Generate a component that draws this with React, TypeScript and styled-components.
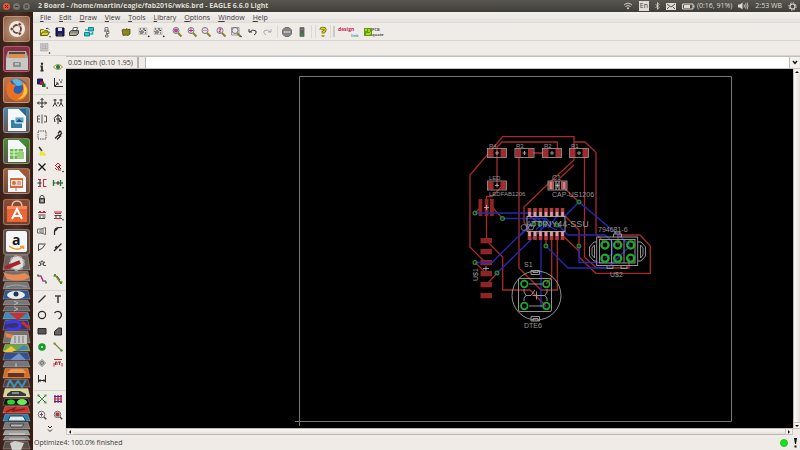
import React from "react";
import styled, { createGlobalStyle } from "styled-components";

const GlobalStyle = createGlobalStyle`
  * { box-sizing: border-box; }
  html, body, #root { height: 100%; margin: 0; }
  body { overflow: hidden; font: 7px/10px "Open Sans", "Noto Sans", sans-serif; color: #3c3c3c; background: #efebe7; }
  button, input { font: inherit; color: inherit; margin: 0; padding: 0; border: 0; background: none; }
  svg { display: block; flex: none; }
`;

const Desktop = styled.div`
  height: 100vh;
  display: flex;
  flex-direction: column;
`;

/* ---------- top panel ---------- */
const Panel = styled.header`
  height: 12px;
  flex: none;
  display: flex;
  align-items: center;
  padding: 0 3px;
  background: linear-gradient(#58564e, #3f3e39);
  color: #dfdbd2;
`;
const WindowButtons = styled.div`
  display: flex;
  gap: 3px;
  width: 35px;
`;
const RoundButton = styled.button<{ $close?: boolean }>`
  width: 7px;
  height: 7px;
  border-radius: 50%;
  display: grid;
  place-items: center;
  background: ${(p) => (p.$close ? "#e9562c" : "#75736b")};
`;
const Title = styled.h1`
  margin: 0;
  flex: 1;
  font-size: 7px;
  line-height: 12px;
  font-weight: 700;
  white-space: nowrap;
`;
const Indicators = styled.div`
  display: flex;
  align-items: center;
  gap: 6px;
  white-space: nowrap;
`;
const Language = styled.span`
  width: 10px;
  height: 10px;
  background: #dfdbd2;
  color: #45433e;
  text-align: center;
`;
const Battery = styled.span`
  display: flex;
  align-items: center;
  gap: 2px;
`;

/* ---------- launcher ---------- */
const Body = styled.div`
  flex: 1;
  display: flex;
  min-height: 0;
`;
const Launcher = styled.nav`
  width: 33px;
  flex: none;
  padding: 4px 0 0;
  overflow: hidden;
  background: linear-gradient(90deg, #3a2018, #4b3025 50%, #341c13);
`;
const OpenTiles = styled.div`
  height: 239px;
  display: flex;
  flex-direction: column;
  justify-content: space-between;
  align-items: center;
`;
const Tile = styled.button<{ $bg: string }>`
  width: 27px;
  height: 26px;
  border-radius: 3px;
  border: 1px solid rgba(255, 255, 255, 0.25);
  background: ${(p) => p.$bg};
  display: grid;
  place-items: center;
`;
const FoldedTiles = styled.div`
  display: flex;
  flex-direction: column;
  align-items: center;
`;
const FoldedTile = styled.button<{ $h: number }>`
  height: ${(p) => p.$h}px;
  width: 29px;
  display: block;
  overflow: hidden;
`;

/* ---------- application window ---------- */
const Window = styled.main`
  flex: 1;
  min-width: 0;
  display: flex;
  flex-direction: column;
`;
const MenuBar = styled.nav`
  height: 11px;
  flex: none;
  display: flex;
  gap: 8px;
  padding: 0 7px;
  line-height: 12px;
  background: linear-gradient(#f3f0ed, #e6e2de);
  border-bottom: 1px solid #dcd8d4;
`;
const MenuItem = styled.button`
  &::first-letter { text-decoration: underline; }
`;
const ToolBar = styled.div<{ $h: number; $pad: number }>`
  height: ${(p) => p.$h}px;
  flex: none;
  padding-left: ${(p) => p.$pad}px;
  display: flex;
  align-items: center;
  border-bottom: 1px solid #d9d5d1;
  background: #efece8;
`;
const Slot = styled.button<{ $w: number }>`
  width: ${(p) => p.$w}px;
  height: 14px;
  display: grid;
  place-items: center;
`;
const Divider = styled.i<{ $strong?: boolean }>`
  width: ${(p) => (p.$strong ? 2 : 1)}px;
  height: ${(p) => (p.$strong ? 11 : 13)}px;
  background: ${(p) => (p.$strong ? "#cdc9c5" : "#dad6d2")};
`;
const WorkArea = styled.div`
  flex: 1;
  min-height: 0;
  display: flex;
`;
const ToolBox = styled.aside`
  width: 33px;
  flex: none;
  display: flex;
  flex-direction: column;
  align-items: center;
  padding-top: 3px;
`;
const Handle = styled.i`
  width: 18px;
  height: 1px;
  margin-bottom: 1px;
  background: #cbc7c3;
`;
const ToolGroup = styled.div`
  display: grid;
  grid-template-columns: 16px 16px;
  grid-auto-rows: 16px;
  justify-content: center;
  & + & {
    border-top: 1px solid #d9d5d1;
    margin-top: 2px;
    padding-top: 1px;
  }
`;
const Editor = styled.div`
  flex: 1;
  min-width: 0;
  display: flex;
  flex-direction: column;
`;
const CommandRow = styled.div`
  height: 13px;
  flex: none;
  display: flex;
  border-top: 1px solid #c2bebb;
  border-bottom: 1px solid #c2bebb;
`;
const Coordinates = styled.output`
  width: 73px;
  padding-left: 2px;
  line-height: 11px;
  white-space: nowrap;
  border-right: 2px solid #b5b1ae;
`;
const Spacer = styled.i`
  width: 7px;
  border-right: 1px solid #b5b1ae;
`;
const CommandInput = styled.input`
  flex: 1;
  min-width: 0;
  background: #fff;
  outline: none;
`;
const Drop = styled.button`
  width: 10px;
  margin-right: 1px;
  display: grid;
  place-items: center;
  border-left: 1px solid #bdb9b6;
  background: #f4f2ef;
`;
const Viewport = styled.div`
  flex: 1;
  min-height: 0;
  display: flex;
`;
const Canvas = styled.div`
  flex: 1;
  min-width: 0;
  background: #000;
  overflow: hidden;
  svg { width: 100%; height: 100%; }
`;
const VScroll = styled.div`
  width: 7px;
  display: flex;
  flex-direction: column;
  background: #f6f3f1;
  border-left: 1px solid #bcb6b4;
`;
const HScroll = styled.div`
  height: 7px;
  flex: none;
  margin-right: 7px;
  display: flex;
  background: #f6f3f1;
  border: 1px solid #bcb6b4;
`;
const Thumb = styled.div`
  flex: 1;
  background: linear-gradient(#fbf9f7, #e5dfdc);
`;
const VThumb = styled(Thumb)`
  background: linear-gradient(90deg, #fbf9f7, #e5dfdc);
`;
const ScrollButton = styled.button`
  width: 6px;
  height: 5px;
  display: grid;
  place-items: center;
  background: #f4f1ef;
  outline: 1px solid #c9c3c1;
`;
const Status = styled.footer`
  height: 15px;
  flex: none;
  display: flex;
  align-items: center;
  padding: 0 2px 0 1px;
  gap: 5px;
`;
const StatusText = styled.span`
  flex: 1;
`;
const Lamp = styled.i`
  width: 8px;
  height: 8px;
  border-radius: 50%;
  background: #0be818;
  border: 1px solid #35b937;
`;

/* ---------- icons ---------- */
const K = "#2a2a2a";
const R = "#c22738";
const lens = (
  <>
    <path d="M7 7 10.5 10.5" stroke="#8a8420" strokeWidth="2" />
    <circle cx="5" cy="4.5" r="3" fill="#e8e2ea" stroke="#777" />
  </>
);
const smallLens = (
  <>
    <circle cx="5.5" cy="5.5" r="3.3" fill="#eee" stroke="#777" />
    <path d="M8 8 10.3 10.3" stroke="#444" strokeWidth="1.4" />
  </>
);
const icons: Record<string, React.ReactNode> = {
  open: <><path d="M1.5 9.5V3.5H4.5L5.5 4.5H8.5V6" stroke="#77741c" fill="#e8e357" /><path d="M1.5 9.5 3.5 6H10.5L8.5 9.5Z" fill="#d8d32c" stroke="#625f18" /><path d="M7 2.5Q9 1.5 10 3.5" stroke={K} /><circle cx="11" cy="10.7" r=".8" fill={K} stroke="none" /></>,
  save: <><path d="M2 2H10V10H2Z" fill="#191a7c" stroke="#111" /><path d="M4 2H8V5H4Z" fill="#dfe0ec" stroke="none" /><path d="M4 7.5H8V10H4Z" fill="#444" stroke="none" /></>,
  print: <><path d="M4.5 5 5.5 1.5H9.5L8.5 5" fill="#fff" stroke="#555" /><path d="M1.5 6 3.5 4.5H10.5V7.5L8.5 9.5H1.5Z" fill="#8b8b8b" stroke="#444" /><path d="M2 8H8" stroke="#d3d06e" /></>,
  cam: <><path d="M5.500 1.500H10.500V5H5.500ZM1.500 6.500H6.500V10H1.500Z" fill="#18cbd6" stroke="#12646c" strokeWidth=".8" /><path d="M2 4H5M7 8H9.500V6" stroke="#18b4be" strokeWidth="1.600" /></>,
  board: <><path d="M4 1.5H7V4H4ZM5.5 5.5H8V7.5H5.5ZM4.5 9H7V11H4.5Z" stroke="#666" strokeWidth=".8" /><path d="M3 5H5M7 4V5.5M6 7.5V9" stroke="#444" /></>,
  library: <path d="M2 4 4 3 5 4 7 2.500V4L10 3V8L8 9.500 6 9 3 9.500Z" fill="#8c891a" stroke="#3d3c12" strokeWidth=".7" />,
  script: <><path d="M1 2H9V8.5H1Z" fill="#ddd" stroke="#aaa" strokeWidth=".6" /><path d="M2 3H3M5 3H7M3 5H5M6.5 4.5H8M2 7H5M7 7H8M2 5V6M5 6H6" stroke="#333" /><circle cx="10.7" cy="10.3" r=".9" fill={K} stroke="none" /></>,
  zoomfit: <>{lens}<circle cx="5" cy="4.5" r="2" fill="#b03f9c" stroke="none" /></>,
  zoomin: <>{lens}<path d="M3 4.5H7M5 2.5V6.5" stroke="#b2278a" /></>,
  zoomout: <>{lens}<path d="M3 4.5H7" stroke="#d58abb" /></>,
  zoomredraw: <>{lens}<path d="M4 3H6L4 6H6" stroke="#b2278a" /></>,
  zoomsel: <>{lens}<path d="M1.5 1.5H9V9H1.5Z" stroke="#777" strokeWidth=".7" /><circle cx="11" cy="10.5" r=".8" fill={K} stroke="none" /></>,
  undo: <path d="M2 3V6H5M2.5 6Q6 2.5 9 5Q10 7.5 7 9" stroke="#333" />,
  redo: <path d="M10 3V6H7M9.5 6Q6 2.5 3 5Q2 7.5 5 9" stroke="#aaa" />,
  stop: <><path d="M4 1.5H8L10.5 4V8L8 10.5H4L1.5 8V4Z" fill="#858585" stroke="#707070" /><path d="M3 6H9" stroke="#ddd" strokeWidth="1.6" strokeDasharray="1.2 .5" /></>,
  light: <><path d="M4 1.5H8V10.5H4Z" fill="#555" stroke="#777" /><circle cx="6" cy="3.5" r="1" fill="#888" stroke="none" /><circle cx="6" cy="8.5" r="1.2" fill="#17a32b" stroke="none" /></>,
  help: <><path d="M3.8 4Q4 2 6 2T8.2 4Q8 5.5 6 6V7.5M6 9V10.500" stroke="#4a4810" strokeWidth="2.600" /><path d="M3.8 4Q4 2 6 2T8.2 4Q8 5.5 6 6V7.5M6 9V10.3" stroke="#dfd600" strokeWidth="1.4" /></>,
  grid: <><path d="M1.5 1.5H9V9H1.5Z" fill="#ccc" stroke="#aaa" strokeDasharray="1 .6" /><path d="M4 2V9M6.5 2V9M2 4H9M2 6.5H9" stroke="#aaa" strokeWidth=".6" /><circle cx="10.5" cy="11" r=".8" fill={K} stroke="none" /></>,
  info: <><circle cx="6" cy="2.8" r="1.2" fill={K} stroke="none" /><path d="M4.500 5.500H6V9.500M4.500 9.700H7.500" stroke={K} strokeWidth="1.800" /></>,
  show: <><path d="M1.5 6Q6 1 10.5 6Q6 11 1.5 6Z" stroke="#9a962d" fill="#f7f6c4" /><circle cx="6" cy="6" r="2" fill="#176d68" stroke="none" /></>,
  display: <><path d="M1.5 2H6.5V7H1.5Z" fill="#1b1c93" stroke="#222" /><path d="M4 4.5H8V8H4Z" fill="#b41c28" stroke="none" /><path d="M6 6.5H9.5V10H6Z" fill="#126c29" stroke="none" /><circle cx="11.2" cy="11" r=".8" fill={K} stroke="none" /></>,
  mark: <path d="M2.5 1V9.5H11M3 9 6 6M6 8V6H4M7 3H8M9.5 3H10.5M8 5H10" stroke={K} />,
  move: <path d="M6 1.5V10.5M1.5 6H10.5M4.5 3 6 1.5 7.5 3M4.5 9 6 10.5 7.5 9M3 4.5 1.5 6 3 7.5M9 4.5 10.5 6 9 7.5" stroke={K} />,
  copy: <path d="M1.5 3H4.5M7.5 3H10.5M3 2V6M9 2V6M1 9.5 3 6 5 9.5M7 9.5 9 6 11 9.5M5 6H7" stroke={K} />,
  mirror: <path d="M4 3H1.5V9H4M8 3H10.5V9H8M6 1.5V10.5M1.5 6H4" stroke="#555" />,
  rotate: <path d="M3 9Q1 5 4 3T9 4Q10.5 7 8 8M6 1V11M4 6H8M9.5 8.5H7.5V6.5" stroke={K} />,
  group: <path d="M2 2H10V10H2Z" stroke="#444" strokeDasharray="1.3 1" />,
  change: <path d="M3 9.5 7 5.5M5 10.5 9 6.5M6 4.5 8 2 9.5 3.5M7 7 10 4" stroke={K} strokeWidth="1.3" />,
  paste: <><path d="M3 2 6 6" stroke="#333" strokeWidth="1.5" /><path d="M5 6 8 8 10 10H4Z" fill="#f0ef20" stroke="#e3e330" /></>,
  del: <path d="M2.5 2.5 9.5 9.5M9.5 2.5 2.5 9.5" stroke="#1a1a1a" strokeWidth="1.3" />,
  add: <><path d="M3 5 6 2 9 5M4 5 7 8M8 4 6 9 9 9M3 7 5 9" stroke={R} /><path d="M6 5 9 8" stroke={K} /><circle cx="11" cy="10.5" r=".8" fill={K} stroke="none" /></>,
  pinswap: <><path d="M2 2.5H5M2 9.5H5M8 2.5H10.5M8 9.5H10.5M7.5 2V10" stroke={R} /><path d="M1.5 6H5.5M4 3V9" stroke={K} /></>,
  replace: <><path d="M1.5 3V9M3.5 6H1.5M8.5 6H11M8.5 3V9" stroke="#287b3d" strokeWidth="1.4" /><path d="M4 6H8M6 4V8" stroke={K} /><circle cx="11" cy="10.8" r=".8" fill={K} stroke="none" /></>,
  lock: <><path d="M4 6V3.5Q6 1 8 3.5V6" stroke="#444" /><path d="M3.5 5.5H8.5V10H3.5Z" fill="#777" stroke="#333" /><path d="M6 7V8.5" stroke="#fff" /></>,
  name: <><path d="M2 3.5H10M3 2.5H5M7 2.5H9" stroke={R} /><path d="M2.5 6H9.5M2.5 8H5M6.5 8H9.5M3 9.5H9" stroke="#444" /></>,
  value: <><path d="M2 3H10M3 4.5H9M2 9.5H10" stroke={R} /><path d="M2.5 6.5H9.5M3 8H5M7 8H9" stroke="#444" /><circle cx="11" cy="10.8" r=".8" fill={K} stroke="none" /></>,
  smash: <path d="M1.5 4H5V8H1.5ZM5 4 9.5 2.5V9.5L5 8M7 4V8M3 6H4" stroke="#666" />,
  miter: <path d="M2.5 10V6Q3 3 6 2.5H10M3 6 6 3" stroke={K} strokeWidth="1.2" />,
  split: <path d="M2.5 10V3H9.5M3 9Q7 8 9 3.5" stroke="#444" />,
  optimize: <path d="M2 10 9.5 2.5M7 9H9.500M3 7 5 5" stroke={K} strokeWidth="1.3" />,
  meander: <path d="M2 8.500H4.500V6L3 5.500Q4.500 4 5 5.500Q6 1.500 7 5.500Q8 4 9 5.500L7.500 6V8.500H10M5 7H7" stroke="#555" />,
  route: <><path d="M2 3H5L7 8H10" stroke="#b634a7" strokeWidth="1.3" /><path d="M1 2.5H3M9 9.5H11" stroke="#2f9c3b" strokeWidth="2" /><path d="M5 4 7 7" stroke={R} /></>,
  ripup: <><path d="M1.5 3H4L8 9H10.5" stroke="#83822b" strokeWidth="1.6" /><path d="M2 2H4M8 10H10" stroke="#2f9c3b" strokeWidth="2" /><path d="M5 3 8 7" stroke="#555" /></>,
  wire: <path d="M2.5 9.5 9.5 2.5" stroke={K} strokeWidth="1.3" />,
  text: <path d="M3 3H9M6 3V10" stroke="#444" strokeWidth="1.6" />,
  circle: <circle cx="6" cy="6" r="3.6" stroke={K} strokeWidth="1.2" />,
  arc: <path d="M2.5 4Q5 1.5 8 3Q11 6 8 9L6.5 10" stroke={K} strokeWidth="1.2" />,
  rect: <path d="M2 3.5H10V9H2Z" fill="#555" stroke={K} />,
  polygon: <path d="M2.500 10V6.500L6.500 3H9.500V10Z" fill="#666" stroke="#222" />,
  via: <><circle cx="6" cy="6" r="3.8" fill="#189b2d" stroke="none" /><circle cx="6" cy="6" r="1" fill="#d6f2dd" stroke="none" /></>,
  signal: <><path d="M2.5 2.5 9.5 9.5" stroke="#85843a" strokeWidth="1.3" /><circle cx="2.5" cy="2.5" r="1.2" fill="#79a03b" stroke="none" /><circle cx="9.5" cy="9.5" r="1.2" fill="#4ca03b" stroke="none" /></>,
  hole: <><path d="M6 2.5 9.5 6 6 9.5 2.5 6Z" stroke="#777" /><circle cx="6" cy="6" r="1.4" stroke="#555" /></>,
  attribute: <><path d="M2 2.5H10M2 9.5V6M10 9.5V6" stroke={R} /><path d="M3.5 8V5H5V8M6 5H9M7.5 5V8" stroke="#933" /></>,
  dimension: <path d="M2.5 2V9.5M9.5 2V9.5M3 7.5H9M4.5 6.5 3 7.5 4.5 9M7.5 6.5 9 7.5 7.5 9" stroke={K} />,
  ratsnest: <><path d="M2.5 2.5 9.5 9.5M9.5 2.5 2.5 9.5" stroke="#555" /><path d="M1.5 2.5H3.5M8.5 2.5H10.5M1.5 9.5H3.5M8.5 9.5H10.5M5 6H7" stroke="#2ea037" strokeWidth="2" /></>,
  auto: <><path d="M3 2V10M6 2V10M9 2V10" stroke="#bd2040" strokeWidth="1.4" /><path d="M2 3.5H10M2 8.5H10" stroke="#2c35a8" /><path d="M2 6H10" stroke="#cc293e" /></>,
  erc: <>{smallLens}<path d="M5.5 3.5V7.5" stroke="#2a6d9b" /><path d="M3.8 5.5H7" stroke={R} /></>,
  drc: <>{smallLens}<path d="M4 4H7V7H4Z" fill="#c23b4a" stroke="#a33" /></>,
  more: <path d="M4 2 6 4 8 2M4 5.5 6 7.5 8 5.5" stroke={K} />,
};

const Icon = ({ name }: { name: string }) => (
  <svg width="12" height="12" viewBox="0 0 12 12" fill="none" aria-hidden>
    {icons[name]}
  </svg>
);

const topTools: [string, number][] = [
  ["open", 14], ["save", 15], ["print", 14], ["cam", 15], ["board", 22], ["library", 15], ["", 4],
  ["script", 14], ["script", 15], ["", 4], ["zoomfit", 14], ["zoomin", 15], ["zoomout", 14],
  ["zoomredraw", 15], ["zoomsel", 15], ["", 2], ["undo", 15], ["redo", 13], ["", 4], ["|", 1], ["", 1], ["stop", 15], ["light", 15],
  ["", 2], ["|", 1], ["", 3], ["|", 1], ["help", 14], ["|", 1], ["", 2], ["||", 2],
];

const groups: string[][] = [
  ["info", "show", "display", "mark"],
  ["move", "copy", "mirror", "rotate", "group", "change", "paste", "", "del", "add", "pinswap", "replace",
    "lock", "", "name", "value", "smash", "miter", "split", "optimize", "meander", "", "route", "ripup"],
  ["wire", "text", "circle", "arc", "rect", "polygon", "via", "signal", "hole", "attribute", "dimension", ""],
  ["ratsnest", "auto", "erc", "drc"],
];

const Arrow = ({ d }: { d: string }) => (
  <svg width="6" height="6" viewBox="0 0 6 6" aria-hidden><path d={d} fill="#111" /></svg>
);

/* ---------- launcher drawings ---------- */
const Doc = ({ c, children }: { c: string; children: React.ReactNode }) => (
  <svg width="24" height="24" viewBox="0 0 24 24" fill="none">
    <path d="M3 1H14L21 8V23H3Z" fill="#f5f6f7" />
    <path d="M14 1H21V8Z" fill={c} />
    {children}
  </svg>
);

const tiles: { label: string; bg: string; art: React.ReactNode }[] = [
  {
    label: "Dash", bg: "radial-gradient(#c7a189, #8e6044)",
    art: <svg width="20" height="20" viewBox="0 0 20 20" fill="none"><circle cx="10" cy="10" r="8" fill="#f2eae5" /><circle cx="10" cy="10" r="4" stroke="#6b4634" strokeWidth="1.8" /><g fill="#6b4634" stroke="#f2eae5" strokeWidth=".8"><circle cx="4.8" cy="10" r="1.8" /><circle cx="12.7" cy="5.4" r="1.8" /><circle cx="12.7" cy="14.6" r="1.8" /></g></svg>,
  },
  {
    label: "Files", bg: "#8b2f40",
    art: <svg width="24" height="23" viewBox="0 0 24 23"><path d="M3 3H21L23 9V22H1V9Z" fill="#a9aaa8" /><path d="M4 4H20V9H4Z" fill="#4c4c4a" /><path d="M4 6H20V10H4Z" fill="#e08d4b" /><path d="M1 10H23V22H1Z" fill="#c7c8c6" /><rect x="8" y="14" width="8" height="5" rx="1" fill="#8d8e8c" /><path d="M10 16H14" stroke="#eee" /></svg>,
  },
  {
    label: "Firefox", bg: "linear-gradient(#b87853, #a05b31)",
    art: <svg width="24" height="24" viewBox="0 0 24 24"><circle cx="12" cy="12" r="11" fill="#2b5faf" /><path d="M7 2Q13-1 19 5Q17 8 12 8Q8 5 7 2Z" fill="#5db4e3" /><path d="M1 11Q1 4 5 3L7 6 11 7 9 10Q7 15 13 16Q18 15 18 10Q18 5 15 3Q24 5 23 14Q20 24 11 23Q1 21 1 11Z" fill="#ea7123" /><path d="M18 5Q23 9 22 15Q19 21 13 21Q19 17 19 11Z" fill="#fbc53a" /></svg>,
  },
  { label: "Writer", bg: "linear-gradient(#4e86a5, #69564f)", art: <Doc c="#266c94"><path d="M6 12H17V20H6Z" fill="#3481aa" /><path d="M10 9H19V15H10Z" fill="#5ba5ca" stroke="#e9f4f8" /><path d="M11 14 14 11 18 14Z" fill="#24546c" /></Doc> },
  { label: "Calc", bg: "linear-gradient(#478b3a, #5e5346)", art: <Doc c="#38912c"><path d="M5 10H18V20H5Z" fill="#6dbb4d" /><path d="M5 13H18M5 16H18M9 10V20M13 10V20" stroke="#e8f5e1" /><path d="M12 13H19V20H12Z" fill="#9bd07a" /></Doc> },
  { label: "Impress", bg: "linear-gradient(#a3603c, #6a4b3d)", art: <Doc c="#a75330"><path d="M5 9H18V19H5Z" fill="#c86f46" /><path d="M6 11H17V17H6Z" fill="#f6dfcf" /><circle cx="9" cy="14" r="2" fill="#d0703f" /><path d="M12 13H16M12 15H16M11 19V22" stroke="#c86f46" /></Doc> },
  {
    label: "Software Center", bg: "linear-gradient(#894b32, #77402a)",
    art: <svg width="24" height="24" viewBox="0 0 24 24" fill="none"><path d="M7 7Q7 1 12 1T17 7" stroke="#e7c6b3" strokeWidth="1.4" /><path d="M2 6H22V22H2Z" fill="#ea6636" /><path d="M2 6H22V9H2Z" fill="#f5895c" /><path d="M7 19 12 9 17 19M8 16H17" stroke="#fff" strokeWidth="2" /></svg>,
  },
  {
    label: "Amazon", bg: "#5d4d46",
    art: <svg width="23" height="23" viewBox="0 0 23 23" fill="none"><rect x="1" y="1" width="21" height="21" rx="2" fill="#f6f6f6" /><text x="7" y="15" fontFamily="Open Sans, sans-serif" fontSize="14" fontWeight="700" fill="#161616">a</text><path d="M4 16Q12 22 18 17M15 16.5H18.5V19" stroke="#f09a27" strokeWidth="1.5" /></svg>,
  },
];

const folded: { label: string; h: number; c: string; art: React.ReactNode }[] = [
  { label: "Settings", h: 16, c: "#6a625d", art: <><circle cx="15" cy="8" r="7" fill="#dedede" stroke="#aaa" strokeWidth="2" strokeDasharray="3 2" /><path d="M3 13 18 7" stroke="#a72228" strokeWidth="4" /></> },
  { label: "Eagle", h: 11, c: "#776f6b", art: <path d="M1 1Q9 6 23 2L28 6Q20 12 5 8Z" fill="#eb8a50" /> },
  { label: "Scanner", h: 8, c: "#74777a", art: <path d="M4 5Q14 1 25 5" stroke="#a5a8ab" /> },
  { label: "Viewer", h: 10, c: "#2e568c", art: <><ellipse cx="14" cy="5" rx="9" ry="4" fill="#e8ecef" /><circle cx="14" cy="4" r="2.5" fill="#20345a" /></> },
  { label: "Disk", h: 6, c: "#77777a", art: <path d="M12 1 16 3 12 5" stroke="#bbb" /> },
  { label: "Drive", h: 6, c: "#66666a", art: <path d="M12 1 16 3 12 5" stroke="#bbb" /> },
  { label: "Draw", h: 8, c: "#3b8cb9", art: <path d="M7 1H25L16 8Z" fill="#cd2d34" /> },
  { label: "Magnet", h: 11, c: "#373276", art: <><path d="M3 3Q18-1 18 5T5 9" stroke="#3f3adc" strokeWidth="3" /><path d="M20 2 27 8" stroke="#be3334" strokeWidth="3" /></> },
  { label: "Tools", h: 13, c: "#77716c", art: <><path d="M10 4H25V13H8Z" fill="#c6c8ca" /><path d="M3 2 12 4 9 7 4 6Z" fill="#e6853e" /><path d="M13 5V12M17 5V12M21 5V12" stroke="#777" /></> },
  { label: "Maps", h: 8, c: "#6ca740", art: <><path d="M1 8 9 2 14 6 10 8Z" fill="#f0c43a" /><path d="M14 7 22 1 27 5Z" fill="#467fc6" /></> },
  { label: "Player", h: 9, c: "#354f8b", art: <path d="M8 8 17 1 24 8Z" fill="#7391c8" /> },
  { label: "Monitor", h: 7, c: "#75777a", art: <path d="M14 2V6" stroke="#ccc" /> },
  { label: "Blender", h: 11, c: "#d46e27", art: <><path d="M6 5H22V9H6Z" fill="#613423" /><path d="M9 1H21L24 5H5Z" fill="#ef9850" /></> },
  { label: "Network", h: 9, c: "#4e4240", art: <path d="M5 8 8 1 12 8 16 2 20 8 24 1" stroke="#438db6" strokeWidth="2" /> },
  { label: "Car", h: 10, c: "#d8d697", art: <><path d="M5 6 9 3H18L24 6V8H5Z" fill="#353a3c" /><path d="M10 5H17" stroke="#ddd" /></> },
  { label: "Arduino", h: 8, c: "#111", art: <><ellipse cx="9" cy="4" rx="4" ry="2.5" fill="#2ad62b" /><ellipse cx="20" cy="4" rx="5" ry="3" fill="#67ee59" /></> },
  { label: "Board", h: 8, c: "#c93731", art: <path d="M4 6 13 2 11 5 23 3" stroke="#7d1e1c" strokeWidth="1.5" /> },
  { label: "Screens", h: 8, c: "#2d7fad", art: <path d="M8 2H21L24 7H6Z" fill="#dce9ee" stroke="#17445e" /> },
  { label: "Archive", h: 8, c: "#777b7c", art: <path d="M8 2H22L20 5H9Z" fill="#bbb" stroke="#444" /> },
  { label: "Volume", h: 6, c: "#9da1a1", art: <path d="M7 4H23" stroke="#ddd" /> },
  { label: "Media", h: 5, c: "#878b8b", art: <path d="M7 3H23" stroke="#ccc" /> },
  { label: "Trash", h: 9, c: "#594e49", art: <path d="M8 2 13 0 22 2 19 9H10Z" fill="#cfd0cd" /> },
];

/* ---------- board drawing ---------- */
const Resistor = ({ x, y, c = "#a32a2c" }: { x: number; y: number; c?: string }) => (
  <g>
    <rect x={x - 9} y={y - 4} width="5.5" height="8" fill={c} />
    <rect x={x + 3.5} y={y - 4} width="5.5" height="8" fill={c} />
    <rect x={x - 9.5} y={y - 4.5} width="19" height="9" stroke="#a5a5a5" fill="none" strokeWidth=".8" />
    <path d={`M${x - 2} ${y}h4M${x} ${y - 2}v4`} stroke="#bbb" strokeWidth=".8" />
  </g>
);

const redTraces = [
  "M485 262 470 247V175L502.7 136.7H574V160L548 184 524 207V214",
  "M574 165 560 178M497 185V147L502 142H557.3V150",
  "M502 186 492 196.5H486.5V240",
  "M519 153V268L541 290M529 153H547",
  "M487 241 502.7 257V290H530L546 306",
  "M557.3 235V290H541M551.7 235V278L546 284M546 235V246",
  "M574 142H585L596 152.5V234L605 243",
  "M584.5 155V257L596.5 268H629V258",
  "M563 214 579 230V257L595.7 273.3H650.3V246L640 235H618V245",
  "M563 236 579 251M563 187 579 202",
  "M475 262.5 484 271M497 273 488 283M475 213 480 208M493 208 502.5 218.5",
  "M524 213V222L530 233M530 217 538 222",
];
const blueTraces = [
  "M475 213H532L546 227M502.5 218.5H546L552 225",
  "M475 262.5H492L536 219M497 273 545 226",
  "M541 224V306H546M546 246 568 268H608L617.7 258",
  "M548 228 557 216H565L579 202 630 245M555 222 568 235H605L612.3 242V254L605 258",
  "M579 246V262.5H605M612 262 617.7 258 630 246M520 236 534 222M537 221 557 230M546 218 536 230",
];
const vias = [[475, 213], [502.5, 218.5], [475, 262.5], [497, 273], [579, 202], [579, 246], [546, 246], [534, 224], [540, 224], [545.500, 223], [557.5, 225]];
const chipX = [529.5, 535, 540.5, 546, 551.5, 557, 562.5];
const labels: [number, number, number, string][] = [
  [489, 148, 6, "R4"], [516, 148, 6, "R3"], [544, 148, 6, "R2"], [571, 148, 6, "R1"],
  [489, 180, 6, "LED"], [489, 196, 6, "LEDFAB1206"], [552, 180, 7, "C1"], [552, 197, 7, "CAP-US1206"],
  [526, 227, 9, "ATTINY44-SSU"], [598, 232, 7, "794681-6"], [610, 277, 7, "U$2"],
  [524, 267, 7, "S1"], [524, 328, 7, "DTE6"],
];

const Board = () => (
  <svg viewBox="66 69 727 359" preserveAspectRatio="xMinYMin meet" fill="none" role="img" aria-label="Circuit board layout">
    <path d="M299.5 426V76.5H731.5V421.5H295" stroke="#777" />
    <g stroke="#a82a2a" strokeWidth="1.3">{redTraces.map((d) => <path key={d} d={d} />)}</g>
    <g fill="#8f2427">
      {[478.5, 484.7, 490].map((x) => <rect key={x} x={x} y="199" width="3.8" height="17" />)}
      {[238, 249, 260, 271, 282, 293].map((y) => <rect key={y} x="480.5" y={y} width="11.5" height="5.3" />)}
    </g>
    <g stroke="#2727b5" strokeWidth="1.3">{blueTraces.map((d) => <path key={d} d={d} />)}</g>
    {chipX.map((x) => (
      <g key={x}>
        <path d={`M${x} 208V217M${x} 231V240`} stroke="#b43a3c" strokeWidth="3.6" />
        <path d={`M${x} 212V217M${x} 231V236`} stroke="#d0a4a4" strokeWidth="2.6" />
      </g>
    ))}
    <rect x="527" y="216.5" width="38" height="15" stroke="#aaa" strokeWidth=".9" />
    <circle cx="531" cy="227.500" r="2.5" stroke="#aaa" strokeWidth=".8" />
    <circle cx="524" cy="227.500" r="3" stroke="#888" strokeWidth=".8" />
    {[497, 524.5, 552, 579].map((x) => <Resistor key={x} x={x} y={153} />)}
    <Resistor x={497} y={185.5} />
    <Resistor x={557.5} y={185.5} c="#ba5050" />
    <path d="M551 182V189M564 182V189M556 181V190M559 181V190" stroke="#c9b9b9" />
    <path d="M484 207.5H489M486.5 205V210M483 268.5H489M486 266V271" stroke="#bbb" strokeWidth=".8" />
    <g stroke="#a2a2a2" strokeWidth=".9">
      <circle cx="536.5" cy="295.5" r="24.5" />
      <rect x="518.5" y="278.5" width="33" height="33" rx="1.5" />
      <path d="M531 270.500H539.500V274.500H531ZM531 316.500H539.500V321H531ZM533 270.500V272.500H538V270.500M533 321V318.500H538V321" />
      <path d="M529 284H542M529 306H542M524 289V292L526 295.500H531L535 290M524 301V298L526 295.500M547 289V292L545 295.500H537M547 301V298L545 295.500M532.500 295.500H540.500M536.500 291.500V299.500" />
      <rect x="596.700" y="237" width="41" height="28.500" />
      <rect x="599.500" y="239.500" width="35.500" height="23.500" />
      <path d="M597 242H594L589.500 247V256L594 261H597M594.500 245 592 248V255L594.500 258ZM638 242H641L645.500 247V256L641 261H638M640.500 245 643 248V255L640.500 258Z" />
      <path d="M613.500 237V234H621.500V237M615 234V232H620V234M607 265.500V268.500H613V265.500M621 265.500V268.500H627V265.500M611.500 240V263M624 240V263" />
    </g>
    <g stroke="#23a62c" strokeWidth="2.300">
      {[605, 617.7, 630.7].flatMap((x) => [245, 258.3].map((y) => <circle key={`${x}-${y}`} cx={x} cy={y} r="3.600" />))}
    </g>
    <g stroke="#22a62b" strokeWidth="1.700">
      {[524.3, 546.3].flatMap((x) => [284, 306].map((y) => <circle key={`${x}-${y}`} cx={x} cy={y} r="3.300" />))}
    </g>
    <g stroke="#25902d" strokeWidth="1.200">{vias.map(([x, y]) => <circle key={`${x}-${y}`} cx={x} cy={y} r="1.900" />)}</g>
    <g fill="#969696" fontFamily="Liberation Sans, Arial, sans-serif">
      {labels.map(([x, y, s, t]) => <text key={t} x={x} y={y} fontSize={s}>{t}</text>)}
      <text transform="translate(478 281) rotate(-90)" fontSize="7">U$1</text>
    </g>
  </svg>
);

const P = "#dfdbd2";

export default function App() {
  return (
    <Desktop>
      <GlobalStyle />
      <Panel>
        <WindowButtons>
          <RoundButton $close aria-label="Close"><svg width="5" height="5" viewBox="0 0 5 5"><path d="M1 1 4 4M4 1 1 4" stroke="#5a2010" /></svg></RoundButton>
          <RoundButton aria-label="Minimize"><svg width="5" height="5" viewBox="0 0 5 5"><path d="M1 2.500H4" stroke="#3b3a35" /></svg></RoundButton>
          <RoundButton aria-label="Maximize"><svg width="5" height="5" viewBox="0 0 5 5" fill="none"><path d="M1.500 1.500H3.500V3.500H1.500Z" stroke="#3b3a35" strokeWidth=".7" /></svg></RoundButton>
        </WindowButtons>
        <Title>2 Board - /home/martin/eagle/fab2016/wk6.brd - EAGLE 6.6.0 Light</Title>
        <Indicators>
          <svg width="10" height="8" viewBox="0 0 10 8" fill="none"><path d="M1 3Q5-.5 9 3M2.500 4.500Q5 2.500 7.500 4.500" stroke={P} strokeWidth=".9" /><circle cx="5" cy="6.300" r="1" fill={P} /></svg>
          <Language>En</Language>
          <svg width="5" height="8" viewBox="0 0 5 8" fill="none"><path d="M.5 2 4 5.500 2.500 7.500V.5L4 2.500 .5 6" stroke={P} strokeWidth=".8" /></svg>
          <svg width="10" height="7" viewBox="0 0 10 7"><path d="M0 0H10V7H0Z" fill={P} /><path d="M1 1 5 4 9 1M1 6 3.500 3.500M9 6 6.500 3.500" stroke="#4a4943" fill="none" strokeWidth=".9" /></svg>
          <Battery>
            <svg width="13" height="7" viewBox="0 0 13 7" fill="none"><path d="M.5 1H11V6H.5ZM12 2.500V4.500" stroke={P} /><path d="M2 2H8V5H2Z" fill={P} /></svg>
            <span>(0:16, 91%)</span>
          </Battery>
          <svg width="11" height="8" viewBox="0 0 11 8" fill="none"><path d="M0 2.500H2L4.500 .5V7.500L2 5.500H0Z" fill={P} /><path d="M6 2.500Q7 4 6 5.500M7.500 1.500Q9 4 7.500 6.500M9 .5Q11 4 9 7.500" stroke={P} strokeWidth=".8" /></svg>
          <span>2:53 WB</span>
          <svg width="9" height="9" viewBox="0 0 9 9" fill="none"><circle cx="4.500" cy="4.500" r="2.500" stroke={P} strokeWidth="1.200" /><circle cx="4.500" cy="4.500" r="3.700" stroke={P} strokeDasharray="1.400 1.500" /></svg>
        </Indicators>
      </Panel>
      <Body>
        <Launcher aria-label="Launcher">
          <OpenTiles>
            {tiles.map((t) => <Tile key={t.label} $bg={t.bg} aria-label={t.label}>{t.art}</Tile>)}
          </OpenTiles>
          <FoldedTiles>
            {folded.map((t) => (
              <FoldedTile key={t.label} $h={t.h} aria-label={t.label}>
                <svg width="29" height={t.h} viewBox={`0 0 29 ${t.h}`} fill="none">
                  <path d={`M3 .5H26L28 ${t.h - 1}H1Z`} fill={t.c} stroke="rgba(255,255,255,.35)" strokeWidth=".7" />
                  {t.art}
                </svg>
              </FoldedTile>
            ))}
          </FoldedTiles>
        </Launcher>
        <Window>
          <MenuBar>
            {["File", "Edit", "Draw", "View", "Tools", "Library", "Options", "Window", "Help"].map((m) => <MenuItem key={m}>{m}</MenuItem>)}
          </MenuBar>
          <ToolBar $h={18} $pad={5}>
            {topTools.map(([n, w], i) =>
              n === "|" || n === "||" ? <Divider key={i} $strong={n === "||"} /> : n ? <Slot key={i} $w={w} aria-label={n}><Icon name={n} /></Slot> : <Slot as="span" key={i} $w={w} />
            )}
            <Slot $w={28} aria-label="design link">
              <svg width="22" height="13" viewBox="0 0 22 13"><text x="0" y="6" fontFamily="Open Sans, sans-serif" fontWeight="700" fontSize="5" fill="#c52653">design</text><text x="13" y="12" fontFamily="Open Sans, sans-serif" fontWeight="700" fontSize="4" fill="#3ca3bf">link</text></svg>
            </Slot>
            <Slot $w={22} aria-label="PCB quote">
              <svg width="20" height="12" viewBox="0 0 20 12"><path d="M0 2H8V10H0Z" fill="#5f9c12" /><path d="M1 4H3M5 3V6M2 8H6M6 7H7" stroke="#d5e42f" strokeWidth="1.300" /><text x="8" y="5" fontFamily="Open Sans, sans-serif" fontSize="4" fontWeight="700" fill="#555">PCB</text><text x="8" y="10" fontFamily="Open Sans, sans-serif" fontSize="4" fontWeight="700" fill="#555">quote</text></svg>
            </Slot>
          </ToolBar>
          <ToolBar $h={15} $pad={5}>
            <Slot $w={14} aria-label="grid"><Icon name="grid" /></Slot>
          </ToolBar>
          <WorkArea>
            <ToolBox>
              <Handle />
              {groups.map((g, i) => (
                <ToolGroup key={i}>
                  {g.map((n, j) => n ? <Slot key={j} $w={16} aria-label={n}><Icon name={n} /></Slot> : <span key={j} />)}
                </ToolGroup>
              ))}
              <Slot $w={16} aria-label="More tools"><Icon name="more" /></Slot>
            </ToolBox>
            <Editor>
              <CommandRow>
                <Coordinates>0.05 inch (0.10 1.95)</Coordinates>
                <Spacer />
                <CommandInput aria-label="Command" />
                <Drop aria-label="Command history"><svg width="6" height="5" viewBox="0 0 6 5" fill="none"><path d="M1 1 3 3.500 5 1" stroke="#111" strokeWidth="1.400" /></svg></Drop>
              </CommandRow>
              <Viewport>
                <Canvas><Board /></Canvas>
                <VScroll>
                  <ScrollButton aria-label="Scroll up"><Arrow d="M1 4 3 2 5 4Z" /></ScrollButton>
                  <VThumb />
                  <ScrollButton aria-label="Scroll down"><Arrow d="M1 2 3 4 5 2Z" /></ScrollButton>
                </VScroll>
              </Viewport>
              <HScroll>
                <ScrollButton aria-label="Scroll left"><Arrow d="M4 1 2 3 4 5Z" /></ScrollButton>
                <Thumb />
                <ScrollButton aria-label="Scroll right"><Arrow d="M2 1 4 3 2 5Z" /></ScrollButton>
              </HScroll>
            </Editor>
          </WorkArea>
          <Status>
            <StatusText>Optimize4: 100.0% finished</StatusText>
            <Lamp />
            <svg width="5" height="10" viewBox="0 0 5 10"><path d="M1 0H4L3 6H2ZM1.500 7.500H3.500V9.500H1.500Z" fill="#111" /></svg>
          </Status>
        </Window>
      </Body>
    </Desktop>
  );
}
